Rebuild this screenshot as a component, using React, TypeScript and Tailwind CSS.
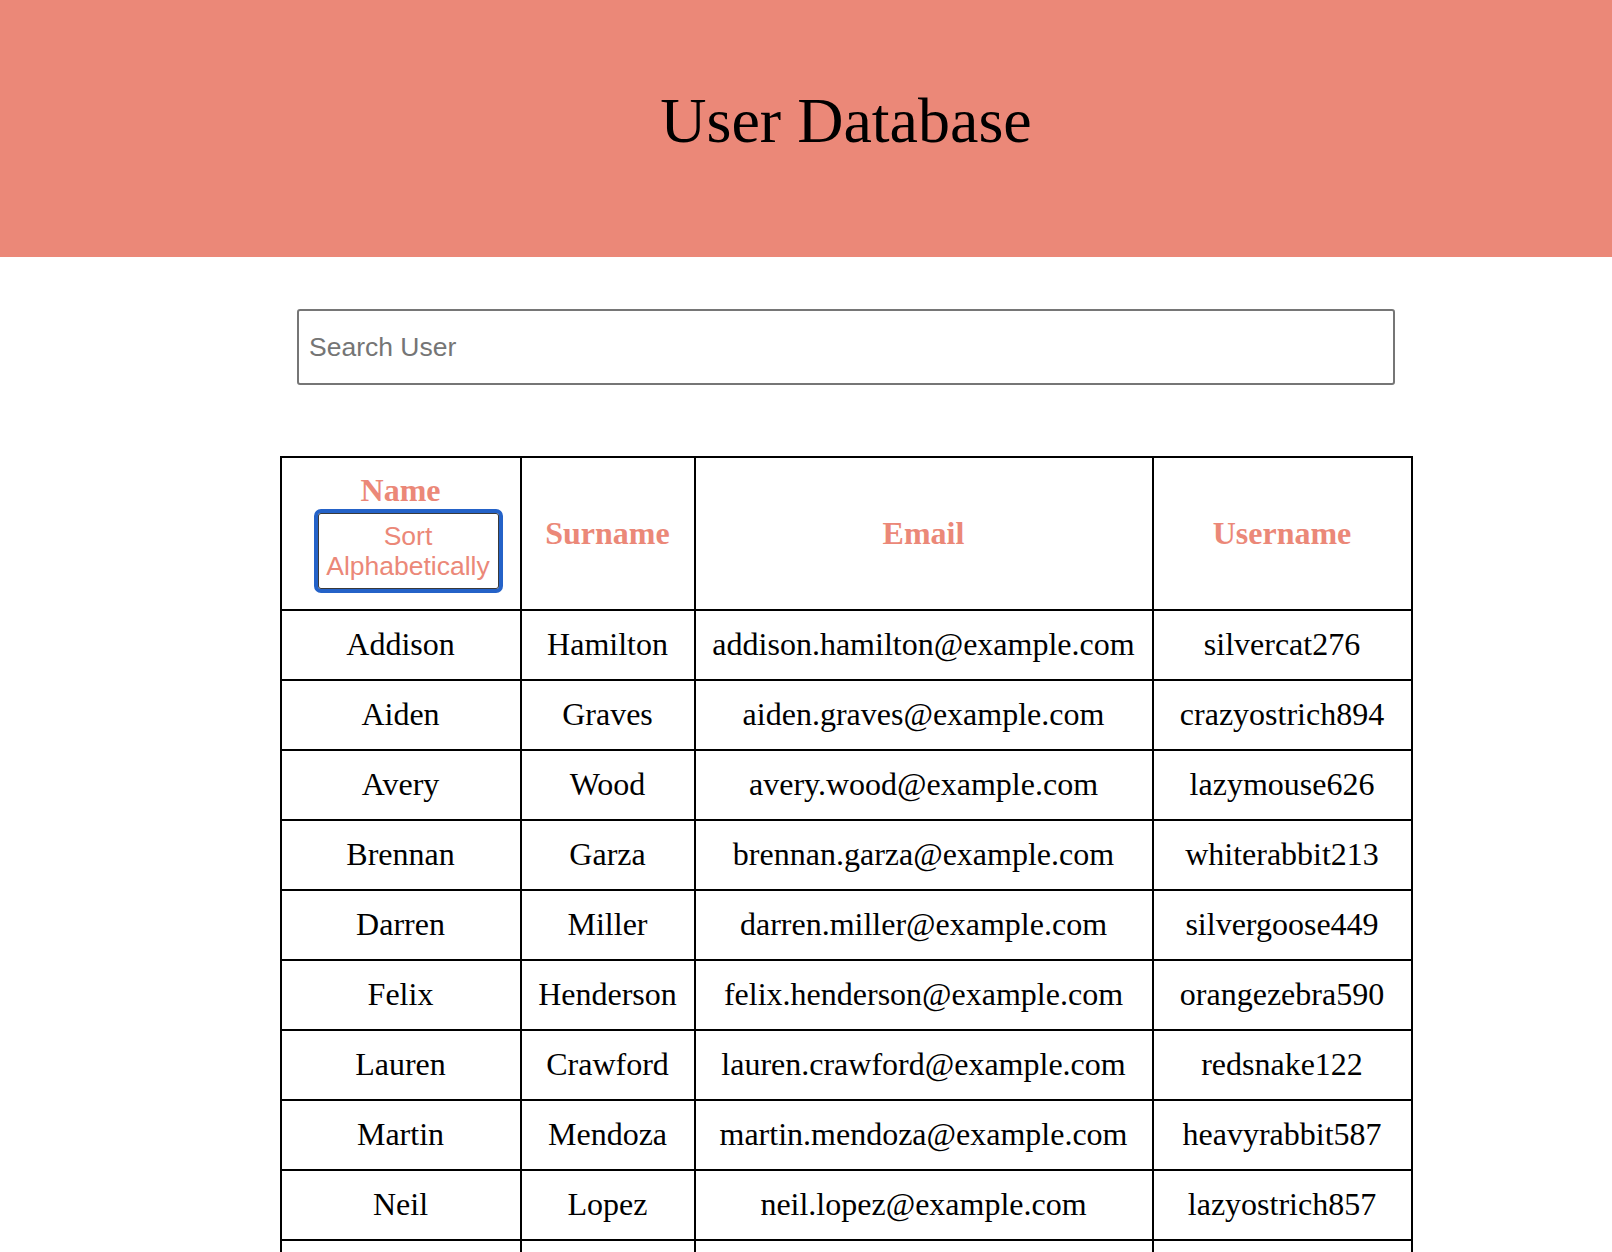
import { useState } from "react"

type User = {
    name: string
    surname: string
    email: string
    username: string
}

const users: User[] = [
    { name: 'Addison', surname: 'Hamilton', email: 'addison.hamilton@example.com', username: 'silvercat276' },
    { name: 'Aiden', surname: 'Graves', email: 'aiden.graves@example.com', username: 'crazyostrich894' },
    { name: 'Avery', surname: 'Wood', email: 'avery.wood@example.com', username: 'lazymouse626' },
    { name: 'Brennan', surname: 'Garza', email: 'brennan.garza@example.com', username: 'whiterabbit213' },
    { name: 'Darren', surname: 'Miller', email: 'darren.miller@example.com', username: 'silvergoose449' },
    { name: 'Felix', surname: 'Henderson', email: 'felix.henderson@example.com', username: 'orangezebra590' },
    { name: 'Lauren', surname: 'Crawford', email: 'lauren.crawford@example.com', username: 'redsnake122' },
    { name: 'Martin', surname: 'Mendoza', email: 'martin.mendoza@example.com', username: 'heavyrabbit587' },
    { name: 'Neil', surname: 'Lopez', email: 'neil.lopez@example.com', username: 'lazyostrich857' },
    { name: 'Olivia', surname: 'Parker', email: 'olivia.parker@example.com', username: 'bluepanda318' },
    { name: 'Ruby', surname: 'Stone', email: 'ruby.stone@example.com', username: 'tinyfrog702' },
]

export default function App() {

    const [search, setSearch] = useState('')
    const [sorted, setSorted] = useState(true)

    const list = users
        .filter(user => `${user.name} ${user.surname} ${user.username}`.toLowerCase().includes(search.toLowerCase()))
        .sort((a, b) => sorted ? a.name.localeCompare(b.name) : 0)

    const cell = "border-2 border-black px-4 py-[15.6px] text-center"
    const head = "border-2 border-black px-4 text-center font-bold text-[#eb8878]"

    return (
        <div className="min-h-screen bg-white font-['Liberation_Serif',serif] text-black">
            <header className="h-[257px] bg-[#eb8878] pt-[84px]">
                <h1 className="pl-[80px] text-center text-[64px] leading-[73.5px] font-normal">
                    User Database
                </h1>
            </header>

            <main className="pl-[80px] pt-[52px] pb-16">
                <div className="flex justify-center">
                    <input
                        type="text"
                        placeholder="Search User"
                        value={search}
                        onChange={e => setSearch(e.target.value)}
                        className="h-[76px] w-[1098px] rounded-[3px] border-2 border-[#767676] bg-white px-[10px] font-['Liberation_Sans',sans-serif] text-[26.5px] placeholder:text-[#757575] outline-none"
                    />
                </div>

                <div className="mt-[71px] flex justify-center">
                    <table className="w-[1131px] table-fixed border-collapse border-2 border-black text-[32px] leading-[36.8px]">
                        <thead>
                            <tr>
                                <th className={`${head} w-[240px] pt-[14px] pb-[16px]`}>
                                    <div>Name</div>
                                    <button
                                        type="button"
                                        onClick={() => setSorted(!sorted)}
                                        className="ml-[16px] block h-[84px] w-[189px] rounded-[7px] border-[4px] border-[#2462c8] bg-white px-2 font-['Liberation_Sans',sans-serif] text-[26.5px] leading-[30px] font-normal text-[#eb8878] shadow-[inset_0_0_0_1px_#3a3a3a]"
                                    >
                                        Sort Alphabetically
                                    </button>
                                </th>
                                <th className={`${head} w-[174px]`}>Surname</th>
                                <th className={`${head} w-[458px]`}>Email</th>
                                <th className={`${head} w-[259px]`}>Username</th>
                            </tr>
                        </thead>
                        <tbody>
                            {list.map(user => (
                                <tr key={user.username}>
                                    <td className={cell}>{user.name}</td>
                                    <td className={cell}>{user.surname}</td>
                                    <td className={`${cell} px-2`}>{user.email}</td>
                                    <td className={cell}>{user.username}</td>
                                </tr>
                            ))}
                        </tbody>
                    </table>
                </div>
            </main>
        </div>
    )
}
